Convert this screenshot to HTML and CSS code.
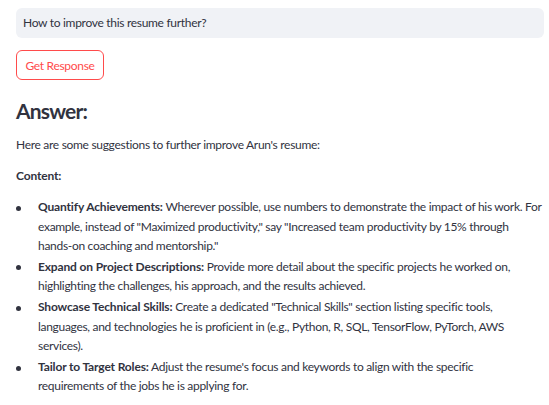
FILE: index.html
```html
<!DOCTYPE html>
<html lang="en">
<head>
<meta charset="utf-8">
<title>Resume Answer</title>
<link rel="stylesheet" href="styles.css">
</head>
<body>
<main class="page">
  <div class="query">How to improve this resume further?</div>
  <button class="btn" type="button">Get Response</button>
  <h3 class="answer-title">Answer:</h3>
  <p class="text">Here are some suggestions to further improve Arun's resume:</p>
  <p class="text"><strong>Content:</strong></p>
  <ul class="list">
    <li><strong>Quantify Achievements:</strong> Wherever possible, use numbers to demonstrate the impact of his work. For example, instead of "Maximized productivity," say "Increased team productivity by 15% through hands-on coaching and mentorship."</li>
    <li><strong>Expand on Project Descriptions:</strong> Provide more detail about the specific projects he worked on, highlighting the challenges, his approach, and the results achieved.</li>
    <li><strong>Showcase Technical Skills:</strong> Create a dedicated "Technical Skills" section listing specific tools, languages, and technologies he is proficient in (e.g., Python, R, SQL, TensorFlow, PyTorch, AWS services).</li>
    <li><strong>Tailor to Target Roles:</strong> Adjust the resume's focus and keywords to align with the specific<br>requirements of the jobs he is applying for.</li>
  </ul>
</main>
</body>
</html>
```
FILE: styles.css
```css
html, body {
  margin: 0;
  padding: 0;
  background: #ffffff;
}
body {
  font-family: Lato, "Open Sans", sans-serif;
  color: #31333f;
  font-size: 12px;
  line-height: 19.2px;
  letter-spacing: -0.3px;
}
.page {
  padding: 8px 5px 0 16px;
  display: flex;
  flex-direction: column;
  align-items: flex-start;
}
.query {
  align-self: stretch;
  height: 30px;
  box-sizing: border-box;
  background: #f0f2f6;
  border-radius: 6px;
  padding: 0 7px;
  display: flex;
  align-items: center;
  font-size: 12px;
}
.btn {
  margin-top: 12px;
  width: 88px;
  height: 30px;
  box-sizing: border-box;
  border: 1px solid #ff4b4b;
  border-radius: 6px;
  background: #ffffff;
  color: #ff4b4b;
  font-family: inherit;
  font-size: 12px;
  letter-spacing: -0.3px;
  padding: 0;
}
.answer-title {
  margin: 18px 0 11px;
  font-size: 21px;
  line-height: 26px;
  font-weight: 700;
  letter-spacing: -0.8px;
}
.text {
  margin: 0 0 12px;
}
.text strong, .list strong {
  font-weight: 700;
  letter-spacing: -0.15px;
}
.list {
  list-style: none;
  margin: 0;
  padding: 0;
  align-self: stretch;
}
.list li {
  padding-left: 22px;
  margin-bottom: 2px;
}
.list li::before {
  content: "";
  display: inline-block;
  width: 5px;
  height: 5px;
  border-radius: 50%;
  background: #31333f;
  vertical-align: middle;
  margin: 0 17px 0 -22px;
}
```
